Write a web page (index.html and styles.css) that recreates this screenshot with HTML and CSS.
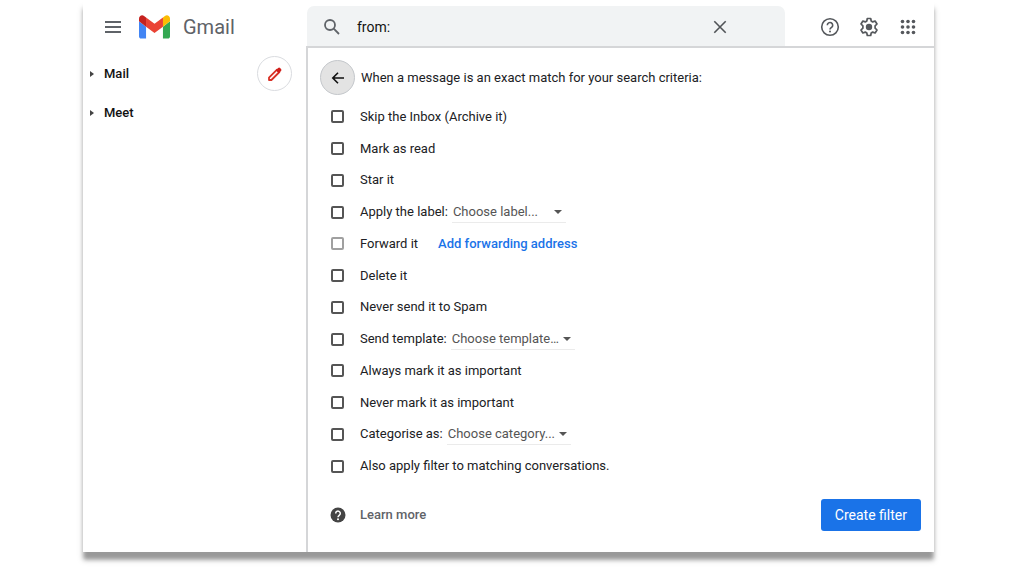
FILE: index.html
```
<!DOCTYPE html>
<html lang="en">
<head>
<meta charset="utf-8">
<title>Gmail</title>
<link rel="stylesheet" href="styles.css">
</head>
<body>
<div class="window">
  <header class="topbar">
    <div class="brand">
      <button class="icon-button" type="button" aria-label="Main menu">
        <svg width="18" height="14" viewBox="0 0 18 14" fill="none" stroke="#5f6368" stroke-width="2"><path d="M1 2h16M1 7h16M1 12h16"/></svg>
      </button>
      <svg class="logo" width="31" height="24" viewBox="52 42 88 66" aria-hidden="true">
        <path fill="#4285f4" d="M58 108h14V74L52 59v43c0 3.320 2.690 6 6 6"/>
        <path fill="#34a853" d="M120 108h14c3.320 0 6-2.690 6-6V59l-20 15"/>
        <path fill="#fbbc04" d="M120 48v26l20-15v-8c0-7.420-8.470-11.650-14.400-7.200"/>
        <path fill="#ea4335" d="M72 74V48l24 18 24-18v26L96 92"/>
        <path fill="#c5221f" d="M52 51v8l20 15V48l-5.600-4.200c-5.940-4.450-14.400-.220-14.400 7.200"/>
      </svg>
      <span class="wordmark">Gmail</span>
    </div>
    <form class="search">
      <button class="icon-button" type="button" aria-label="Search">
        <svg width="18" height="18" viewBox="0 0 18 18" fill="none" stroke="#5f6368" stroke-width="1.800"><circle cx="7" cy="7" r="5"/><path d="M10.700 10.700L16 16"/></svg>
      </button>
      <input class="search-input" type="text" value="from:" aria-label="Search mail">
      <button class="icon-button" type="button" aria-label="Clear search">
        <svg width="14" height="14" viewBox="0 0 14 14" fill="none" stroke="#505357" stroke-width="1.600"><path d="M1.300 1.300l11.400 11.400M12.700 1.300L1.300 12.700"/></svg>
      </button>
    </form>
    <nav class="tools" aria-label="Tools">
      <button class="icon-button" type="button" aria-label="Support">
        <svg width="20" height="20" viewBox="0 0 20 20" fill="none" stroke="#55585c" stroke-width="1.600"><circle cx="10" cy="10" r="8.300"/><path d="M7.300 8.200a2.700 2.700 0 1 1 4.300 2.200c-1 .7-1.600 1.100-1.600 2.200"/><circle cx="10" cy="14.600" r="1" fill="#55585c" stroke="none"/></svg>
      </button>
      <button class="icon-button" type="button" aria-label="Settings">
        <svg width="20" height="20" viewBox="0 0 20 20" fill="none" stroke="#55585c" stroke-width="1.700" stroke-linejoin="round"><path d="M8.300 1.500h3.400l.5 2.500 1.500.9 2.400-.9 1.900 3-1.900 1.800v2.400l1.900 1.800-1.900 3-2.400-.9-1.500.9-.5 2.500H8.300L7.800 16l-1.500-.9-2.400.9L2 13l1.900-1.800V8.800L2 7l1.900-3 2.400.9L7.800 4z"/><circle cx="10" cy="10" r="3.200" fill="#55585c" stroke="none"/></svg>
      </button>
      <button class="icon-button" type="button" aria-label="Apps">
        <svg width="20" height="20" viewBox="0 0 20 20" fill="#55585c"><circle cx="4.500" cy="4.500" r="1.800"/><circle cx="10" cy="4.500" r="1.800"/><circle cx="15.500" cy="4.500" r="1.800"/><circle cx="4.500" cy="10" r="1.800"/><circle cx="10" cy="10" r="1.800"/><circle cx="15.500" cy="10" r="1.800"/><circle cx="4.500" cy="15.500" r="1.800"/><circle cx="10" cy="15.500" r="1.800"/><circle cx="15.500" cy="15.500" r="1.800"/></svg>
      </button>
    </nav>
  </header>

  <div class="content">
    <aside class="sidebar">
      <nav class="sections" aria-label="Sections">
        <button class="section" type="button"><svg width="5" height="8" viewBox="0 0 5 8" fill="#444"><path d="M0 1l4 3-4 3z"/></svg>Mail</button>
        <button class="section" type="button"><svg width="5" height="8" viewBox="0 0 5 8" fill="#444"><path d="M0 1l4 3-4 3z"/></svg>Meet</button>
      </nav>
      <button class="compose" type="button" aria-label="Compose">
        <svg width="16" height="16" viewBox="0 0 16 16"><path d="M2 14v-2.400L10 3.600l2.400 2.400L4.400 14z" fill="none" stroke="#d93025" stroke-width="1.800" stroke-linejoin="round"/><path d="M8.800 4.300l2.300-2.300a1.400 1.400 0 0 1 2 0l.9.900a1.400 1.400 0 0 1 0 2l-2.300 2.300z" fill="#d01f1a"/></svg>
      </button>
    </aside>

    <main class="panel">
      <div class="panel-head">
        <button class="back" type="button" aria-label="Back">
          <svg width="14" height="14" viewBox="0 0 14 14" fill="none" stroke="#111" stroke-width="1.600"><path d="M13 7H2M7 1.800L1.800 7 7 12.200"/></svg>
        </button>
        <span>When a message is an exact match for your search criteria:</span>
      </div>
      <ul class="options">
        <li class="option"><input class="check" type="checkbox" id="skip"><label for="skip">Skip the Inbox (Archive it)</label></li>
        <li class="option"><input class="check" type="checkbox" id="read"><label for="read">Mark as read</label></li>
        <li class="option"><input class="check" type="checkbox" id="star"><label for="star">Star it</label></li>
        <li class="option"><input class="check" type="checkbox" id="label"><label for="label">Apply the label:</label><span class="picker picker-narrow"><select class="select" aria-label="Label"><option>Choose label...</option></select></span></li>
        <li class="option"><input class="check" type="checkbox" id="forward" disabled><label for="forward">Forward it</label><a class="forward-link" href="#">Add forwarding address</a></li>
        <li class="option"><input class="check" type="checkbox" id="delete"><label for="delete">Delete it</label></li>
        <li class="option"><input class="check" type="checkbox" id="spam"><label for="spam">Never send it to Spam</label></li>
        <li class="option"><input class="check" type="checkbox" id="template"><label for="template">Send template:</label><span class="picker"><select class="select" aria-label="Template"><option>Choose template…</option></select></span></li>
        <li class="option"><input class="check" type="checkbox" id="always"><label for="always">Always mark it as important</label></li>
        <li class="option"><input class="check" type="checkbox" id="never"><label for="never">Never mark it as important</label></li>
        <li class="option"><input class="check" type="checkbox" id="category"><label for="category">Categorise as:</label><span class="picker"><select class="select" aria-label="Category"><option>Choose category...</option></select></span></li>
        <li class="option"><input class="check" type="checkbox" id="also"><label for="also">Also apply filter to matching conversations.</label></li>
      </ul>
      <div class="panel-foot">
        <a class="learn" href="#">
          <svg width="16" height="16" viewBox="0 0 16 16"><circle cx="8" cy="8" r="7.500" fill="#444"/><path d="M5.700 6.400a2.300 2.300 0 1 1 3.700 1.800C8.500 8.900 8 9.200 8 10.200" fill="none" stroke="#fff" stroke-width="1.500"/><circle cx="8" cy="12.200" r="1" fill="#fff"/></svg>
          Learn more
        </a>
        <button class="create" type="button">Create filter</button>
      </div>
    </main>
  </div>
</div>
</body>
</html>
```
FILE: styles.css
```
* {
  box-sizing: border-box;
}

body {
  margin: 0;
  min-height: 100vh;
  display: flex;
  padding: 0 90px 24px 83px;
  background: #fff;
  color: #202124;
  font: 13px/20px Roboto, "Liberation Sans", sans-serif;
}

button,
input,
select {
  font: inherit;
  color: inherit;
}

button {
  padding: 0;
  border: 0;
  background: none;
  cursor: pointer;
}

a {
  text-decoration: none;
}

.window {
  flex: 1;
  min-width: 0;
  display: flex;
  flex-direction: column;
  background: #fff;
  box-shadow: 0 8px 4px -1px #999, 0 8px 6px #ccc;
}

.topbar {
  display: flex;
  align-items: center;
  padding-top: 6px;
}

.brand {
  flex: 0 0 224px;
  display: flex;
  align-items: center;
  padding: 1px 0 0 21px;
}

.icon-button {
  display: flex;
}

.logo {
  margin: 0 13px 0 17px;
}

.wordmark {
  color: #5f6368;
  font-size: 20px;
  line-height: 24px;
}

.search {
  flex: 1;
  min-width: 0;
  height: 40px;
  display: flex;
  align-items: center;
  gap: 16px;
  padding: 2px 58px 0 16px;
  background: #f1f3f4;
  border-radius: 7px 7px 0 0;
}

.search-input {
  flex: 1;
  min-width: 0;
  padding: 0;
  border: 0;
  outline: 0;
  background: none;
  color: #111;
  font-size: 14px;
}

.tools {
  display: flex;
  gap: 19px;
  padding: 2px 16px 0 35px;
}

.content {
  flex: 1;
  display: flex;
}

.sidebar {
  flex: 0 0 223px;
  display: flex;
  justify-content: space-between;
  align-items: flex-start;
  padding: 10px 14px 0 7px;
}

.sections {
  display: grid;
  gap: 19px;
  padding-top: 8px;
}

.section {
  display: flex;
  align-items: center;
  gap: 9px;
  color: #111;
  font-weight: 500;
}

.compose {
  width: 35px;
  height: 35px;
  display: grid;
  place-items: center;
  border: 1px solid #dadce0;
  border-radius: 50%;
}

.panel {
  flex: 1;
  min-width: 0;
  display: flex;
  flex-direction: column;
  padding: 12px 13px 21px 12px;
  border-top: 2px solid #d5d6d8;
  border-left: 2px solid #d5d6d8;
}

.panel-head {
  display: flex;
  align-items: center;
  gap: 6px;
}

.back {
  width: 35px;
  height: 35px;
  display: grid;
  place-items: center;
  border: 1px solid #c4c7cb;
  border-radius: 50%;
  background: #e3e3e3;
}

.options {
  flex: 1;
  display: grid;
  grid-auto-rows: 1fr;
  margin: 6px 0 17px;
  padding: 0 0 0 10px;
  list-style: none;
}

.option {
  display: flex;
  align-items: center;
}

.check {
  appearance: none;
  width: 13px;
  height: 13px;
  margin: 0 16px 0 1px;
  border: 2px solid #555;
  border-radius: 2px;
}

.check:disabled {
  border-color: #a0a0a0;
}

.picker {
  position: relative;
  width: 124px;
  margin-left: 4px;
  border-bottom: 1px solid #ebebeb;
}

.picker-narrow {
  width: 114px;
}

.picker::after {
  content: "";
  position: absolute;
  top: 8px;
  right: 4px;
  border: 4px solid transparent;
  border-top-color: #555;
  border-bottom: 0;
  pointer-events: none;
}

.select {
  appearance: none;
  display: block;
  width: 100%;
  padding: 0 14px 0 1px;
  border: 0;
  background: none;
  color: #555;
}

.forward-link {
  margin-left: 20px;
  color: #1a73e8;
  font-weight: 500;
}

.panel-foot {
  display: flex;
  align-items: center;
  justify-content: space-between;
}

.learn {
  display: flex;
  align-items: center;
  gap: 14px;
  padding-left: 10px;
  color: #5f6368;
  font-weight: 500;
}

.create {
  height: 32px;
  padding: 0 14px;
  border-radius: 3px;
  background: #1a73e8;
  color: #fff;
  font-size: 14px;
}
```
